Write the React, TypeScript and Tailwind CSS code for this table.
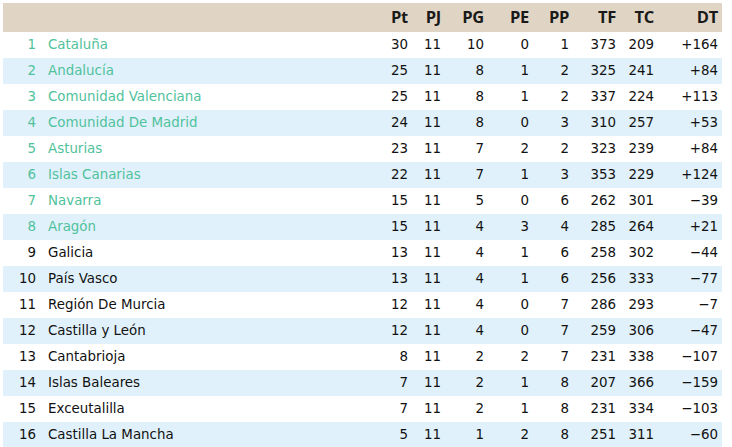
const rows = [
  ["Cataluña", 30, 11, 10, 0, 1, 373, 209, "+164"],
  ["Andalucía", 25, 11, 8, 1, 2, 325, 241, "+84"],
  ["Comunidad Valenciana", 25, 11, 8, 1, 2, 337, 224, "+113"],
  ["Comunidad De Madrid", 24, 11, 8, 0, 3, 310, 257, "+53"],
  ["Asturias", 23, 11, 7, 2, 2, 323, 239, "+84"],
  ["Islas Canarias", 22, 11, 7, 1, 3, 353, 229, "+124"],
  ["Navarra", 15, 11, 5, 0, 6, 262, 301, "-39"],
  ["Aragón", 15, 11, 4, 3, 4, 285, 264, "+21"],
  ["Galicia", 13, 11, 4, 1, 6, 258, 302, "-44"],
  ["País Vasco", 13, 11, 4, 1, 6, 256, 333, "-77"],
  ["Región De Murcia", 12, 11, 4, 0, 7, 286, 293, "-7"],
  ["Castilla y León", 12, 11, 4, 0, 7, 259, 306, "-47"],
  ["Cantabrioja", 8, 11, 2, 2, 7, 231, 338, "-107"],
  ["Islas Baleares", 7, 11, 2, 1, 8, 207, 366, "-159"],
  ["Exceutalilla", 7, 11, 2, 1, 8, 231, 334, "-103"],
  ["Castilla La Mancha", 5, 11, 1, 2, 8, 251, 311, "-60"],
];

const heads = ["Pt", "PJ", "PG", "PE", "PP", "TF", "TC", "DT"];
const widths = ["w-[40px]", "w-[33px]", "w-[43px]", "w-[45px]", "w-[40px]", "w-[47px]", "w-[38px]", "w-[64px]"];

export default function App() {
  return (
    <div className="pt-[3px] pl-[3px] bg-white">
      <table className="table-fixed w-[719px] border-collapse font-['DejaVu_Sans',sans-serif] text-[13.4px]">
        <colgroup>
          <col className="w-[37px]" />
          <col className="w-[332px]" />
          {widths.map(function (w, i) {
            return <col key={i} className={w} />;
          })}
        </colgroup>
        <thead>
          <tr className="h-[29px] bg-[#e0d5c4]">
            <th></th>
            <th></th>
            {heads.map(function (h) {
              return (
                <th key={h} className="text-right pr-[4px] font-['Open_Sans',sans-serif] font-bold text-[16.5px] text-[#1a1a1a] tracking-[-0.3px]">
                  {h}
                </th>
              );
            })}
          </tr>
        </thead>
        <tbody>
          {rows.map(function (r, i) {
            const green = i < 8;
            return (
              <tr key={i} className={"h-[26px] " + (i % 2 === 1 ? "bg-[#e1f1fb]" : "bg-white")}>
                <td className={"text-right pr-[4px] " + (green ? "text-[#4fc29b]" : "text-[#111]")}>{i + 1}</td>
                <td className={"pl-[8px] " + (green ? "text-[#4fc29b]" : "text-[#111]")}>{r[0]}</td>
                {r.slice(1).map(function (v, j) {
                  return (
                    <td key={j} className="text-right pr-[4px] text-[#111]">
                      {String(v).replace("-", "−")}
                    </td>
                  );
                })}
              </tr>
            );
          })}
        </tbody>
      </table>
    </div>
  );
}
